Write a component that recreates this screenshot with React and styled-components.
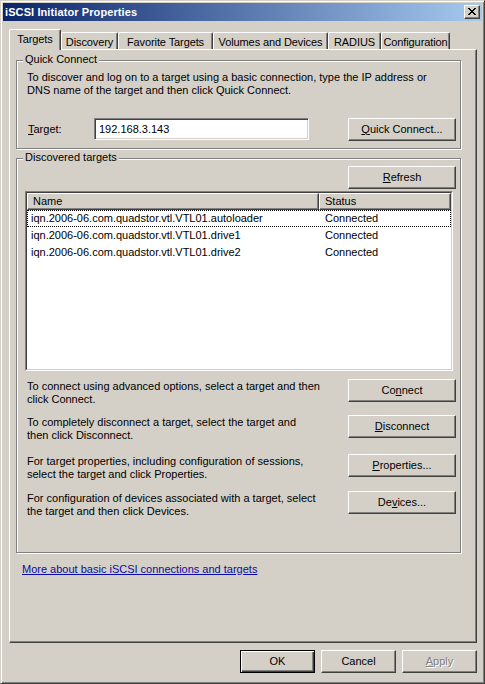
import React from "react";
import styled, { createGlobalStyle, css } from "styled-components";

const Global = createGlobalStyle`
  html, body { margin: 0; padding: 0; background: #d4d0c8; }
  body { font-family: "Liberation Sans", Arial, sans-serif; font-size: 11px; color: #000; }
  * { box-sizing: border-box; }
`;

const Window = styled.div`
  width: 485px;
  height: 684px;
  display: flex;
  flex-direction: column;
  background: #d4d0c8;
  border: 1px solid;
  border-color: #d4d0c8 #404040 #404040 #d4d0c8;
  box-shadow: inset 1px 1px 0 #fff, inset -1px -1px 0 #808080;
  padding: 2px;
`;

const TitleBar = styled.div`
  height: 18px;
  flex: none;
  display: flex;
  align-items: center;
  justify-content: space-between;
  padding: 0 2px 0 2px;
  background: linear-gradient(to right, #0a246a, #a6caf0);
`;

const Title = styled.div`
  color: #fff;
  font-weight: bold;
  font-size: 11px;
  line-height: 13px;
  letter-spacing: 0.1px;
`;

const CloseBtn = styled.div`
  width: 16px;
  height: 14px;
  display: flex;
  align-items: center;
  justify-content: center;
  background: #d4d0c8;
  border: 1px solid;
  border-color: #fff #404040 #404040 #fff;
  box-shadow: inset -1px -1px 0 #808080;
  padding-bottom: 1px;
`;

const TabStrip = styled.div`
  flex: none;
  height: 20px;
  margin-top: 8px;
  padding: 0 5px 0 6px;
  display: flex;
  align-items: flex-end;
`;

const Tab = styled.div`
  width: ${(p) => p.$w}px;
  flex: none;
  position: relative;
  background: #d4d0c8;
  border-top: 1px solid #fff;
  border-left: 1px solid #fff;
  border-right: 1px solid #404040;
  border-top-left-radius: 2px;
  border-top-right-radius: 2px;
  box-shadow: inset -1px 0 0 #808080;
  text-align: center;
  white-space: nowrap;
  line-height: 13px;
  letter-spacing: -0.1px;
  ${(p) =>
    p.$active
      ? css`
          height: 21px;
          margin-bottom: -1px;
          z-index: 1;
          padding-top: 3px;
        `
      : css`
          height: 17px;
          padding-top: 3px;
        `}
`;

const Panel = styled.div`
  flex: 1;
  margin: 0 5px 0 6px;
  display: flex;
  flex-direction: column;
  border: 1px solid;
  border-color: #fff #404040 #404040 #fff;
  box-shadow: inset -1px -1px 0 #808080;
  padding: 10px 15px 0 6px;
`;

const Group = styled.div`
  position: relative;
  border: 1px solid #808080;
  box-shadow: inset 1px 1px 0 #fff, 1px 1px 0 #fff;
  padding: ${(p) => p.$pad};
  margin-top: ${(p) => p.$mt || 0}px;
`;

const Legend = styled.span`
  position: absolute;
  top: -8px;
  left: 6px;
  padding: 0 2px;
  background: #d4d0c8;
  line-height: 13px;
`;

const Text = styled.div`
  line-height: 13px;
`;

const InputRow = styled.div`
  display: flex;
  align-items: center;
  margin-top: 21px;
  height: 23px;
`;

const Label = styled.label`
  width: 67px;
  padding-left: 1px;
  line-height: 13px;
`;

const TextBox = styled.div`
  width: 215px;
  height: 22px;
  background: #fff;
  border: 1px solid;
  border-color: #808080 #fff #fff #808080;
  box-shadow: inset 1px 1px 0 #404040, inset -1px -1px 0 #d4d0c8;
  padding: 3px 4px 0 4px;
  line-height: 14px;
  margin-bottom: 1px;
`;

const Button = styled.div`
  width: ${(p) => p.$w || 75}px;
  height: 23px;
  flex: none;
  display: flex;
  align-items: center;
  justify-content: center;
  background: #d4d0c8;
  border: 1px solid;
  border-color: #fff #404040 #404040 #fff;
  box-shadow: inset -1px -1px 0 #808080;
  line-height: 13px;
  padding-bottom: 1px;
  ${(p) => p.$push && css`margin-left: auto;`}
  ${(p) =>
    p.$default &&
    css`
      border-color: #000;
      box-shadow: inset 1px 1px 0 #fff, inset -1px -1px 0 #404040, inset -2px -2px 0 #808080;
    `}
  ${(p) =>
    p.$disabled &&
    css`
      color: #808080;
      text-shadow: 1px 1px 0 #fff;
    `}
`;

const Key = styled.span`
  text-decoration: underline;
  text-underline-offset: 1px;
`;

const RefreshRow = styled.div`
  display: flex;
  justify-content: flex-end;
`;

const ListFrame = styled.div`
  margin-top: 2px;
  width: 428px;
  height: 180px;
  border: 1px solid;
  border-color: #808080 #fff #fff #808080;
`;

const ListInner = styled.div`
  height: 100%;
  background: #fff;
  border: 1px solid;
  border-color: #404040 #d4d0c8 #d4d0c8 #404040;
`;

const HeaderRow = styled.div`
  display: flex;
  height: 17px;
`;

const HeaderCell = styled.div`
  width: ${(p) => p.$w}px;
  background: #d4d0c8;
  border: 1px solid;
  border-color: #fff #404040 #404040 #fff;
  box-shadow: inset -1px -1px 0 #808080;
  padding-left: 5px;
  line-height: 14px;
`;

const Row = styled.div`
  display: flex;
  height: 17px;
  align-items: center;
  border: 1px solid transparent;
  ${(p) => p.$focus && css`border: 1px dotted #000;`}
`;

const Cell = styled.div`
  width: ${(p) => p.$w}px;
  padding-left: ${(p) => p.$pl}px;
  line-height: 13px;
  white-space: nowrap;
`;

const ActionRow = styled.div`
  display: flex;
  justify-content: space-between;
  align-items: flex-start;
  margin-top: ${(p) => p.$mt}px;
`;

const ActionText = styled.div`
  line-height: 13px;
  margin-left: 2px;
  padding-top: 1px;
`;

const Link = styled.a`
  color: #0c0ca0;
  text-decoration: underline;
  line-height: 13px;
  margin-top: 10px;
  margin-left: 6px;
  align-self: flex-start;
  cursor: pointer;
`;

const Footer = styled.div`
  flex: none;
  display: flex;
  justify-content: flex-end;
  gap: 6px;
  margin: 7px 5px 8px 0;
`;

const tabs = [
  { label: "Targets", w: 52, active: true },
  { label: "Discovery", w: 57 },
  { label: "Favorite Targets", w: 95 },
  { label: "Volumes and Devices", w: 115 },
  { label: "RADIUS", w: 53 },
  { label: "Configuration", w: 69 },
];

const targets = [
  "iqn.2006-06.com.quadstor.vtl.VTL01.autoloader",
  "iqn.2006-06.com.quadstor.vtl.VTL01.drive1",
  "iqn.2006-06.com.quadstor.vtl.VTL01.drive2",
];

const actions = [
  {
    mt: 8,
    text: ["To connect using advanced options, select a target and then", "click Connect."],
    btn: <>Co<Key>n</Key>nect</>,
  },
  {
    mt: 9,
    text: ["To completely disconnect a target, select the target and", "then click Disconnect."],
    btn: <><Key>D</Key>isconnect</>,
  },
  {
    mt: 12,
    text: ["For target properties, including configuration of sessions,", "select the target and click Properties."],
    btn: <><Key>P</Key>roperties...</>,
  },
  {
    mt: 10,
    text: ["For configuration of devices associated with a target, select", "the target and then click Devices."],
    btn: <>De<Key>v</Key>ices...</>,
  },
];

export default function App() {
  return (
    <>
      <Global />
      <Window>
        <TitleBar>
          <Title>iSCSI Initiator Properties</Title>
          <CloseBtn>
            <svg width="8" height="7" viewBox="0 0 8 7" shapeRendering="crispEdges">
              <path d="M0 0h2v1h1v1h2V1h1V0h2v1H7v1H6v1H5v1h1v1h1v1h1v1H6V6H5V5H3v1H2v1H0V6h1V5h1V4h1V3H2V2H1V1H0z" fill="#000" />
            </svg>
          </CloseBtn>
        </TitleBar>

        <TabStrip>
          {tabs.map((t) => (
            <Tab key={t.label} $w={t.w} $active={t.active}>
              {t.label}
            </Tab>
          ))}
        </TabStrip>

        <Panel>
          <Group $pad="10px 4px 7px 10px">
            <Legend>Quick Connect</Legend>
            <Text>
              To discover and log on to a target using a basic connection, type the IP address or
              <br />
              DNS name of the target and then click Quick Connect.
            </Text>
            <InputRow>
              <Label><Key>T</Key>arget:</Label>
              <TextBox>192.168.3.143</TextBox>
              <Button $w={108} $push><Key>Q</Key>uick Connect...</Button>
            </InputRow>
          </Group>

          <Group $pad="7px 4px 34px 8px" $mt={9}>
            <Legend>Discovered targets</Legend>
            <RefreshRow>
              <Button $w={108}><Key>R</Key>efresh</Button>
            </RefreshRow>
            <ListFrame>
              <ListInner>
                <HeaderRow>
                  <HeaderCell $w={292}>Name</HeaderCell>
                  <HeaderCell $w={132}>Status</HeaderCell>
                </HeaderRow>
                {targets.map((t, i) => (
                  <Row key={t} $focus={i === 0}>
                    <Cell $w={291} $pl={3}>{t}</Cell>
                    <Cell $w={130} $pl={6}>Connected</Cell>
                  </Row>
                ))}
              </ListInner>
            </ListFrame>
            {actions.map((a, i) => (
              <ActionRow key={i} $mt={a.mt}>
                <ActionText>
                  {a.text[0]}
                  <br />
                  {a.text[1]}
                </ActionText>
                <Button $w={108}>{a.btn}</Button>
              </ActionRow>
            ))}
          </Group>

          <Link>More about basic iSCSI connections and targets</Link>
        </Panel>

        <Footer>
          <Button $default>OK</Button>
          <Button>Cancel</Button>
          <Button $disabled><Key>A</Key>pply</Button>
        </Footer>
      </Window>
    </>
  );
}
